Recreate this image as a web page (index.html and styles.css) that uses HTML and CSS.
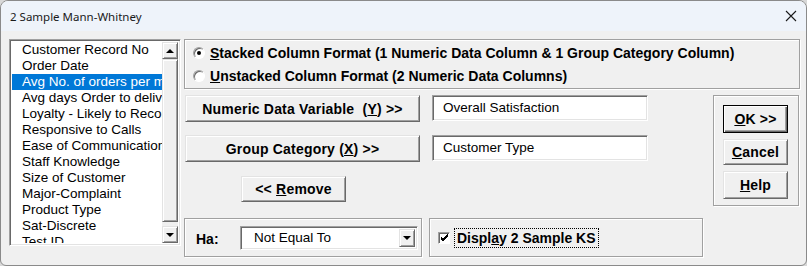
FILE: index.html
```html
<!DOCTYPE html>
<html lang="en">
<head>
    <meta charset="UTF-8">
    <title>2 Sample Mann-Whitney</title>
    <link rel="stylesheet" href="styles.css">
</head>
<body>
    <div class="window">
        <div class="titlebar">
            <span class="title">2 Sample Mann-Whitney</span>
            <svg class="close" width="12" height="12" viewBox="0 0 12 12">
                <path d="M1 1 L11 11 M11 1 L1 11" stroke="#1a1a1a" stroke-width="1.1" fill="none"/>
            </svg>
        </div>

        <div class="client">
            <div class="listbox">
                <ul class="items">
                    <li>Customer Record No</li>
                    <li>Order Date</li>
                    <li class="selected">Avg No. of orders per month</li>
                    <li>Avg days Order to delivery</li>
                    <li>Loyalty - Likely to Recommend</li>
                    <li>Responsive to Calls</li>
                    <li>Ease of Communication</li>
                    <li>Staff Knowledge</li>
                    <li>Size of Customer</li>
                    <li>Major-Complaint</li>
                    <li>Product Type</li>
                    <li>Sat-Discrete</li>
                    <li>Test ID</li>
                </ul>
                <div class="scrollbar">
                    <div class="sb-btn"><span class="arrow up"></span></div>
                    <div class="sb-thumb"></div>
                    <div class="sb-btn"><span class="arrow down"></span></div>
                </div>
            </div>

            <div class="main">
                <div class="group format">
                    <div class="radio-row">
                        <span class="radio checked"></span>
                        <span><u>S</u>tacked Column Format (1 Numeric Data Column &amp; 1 Group Category Column)</span>
                    </div>
                    <div class="radio-row">
                        <span class="radio"></span>
                        <span><u>U</u>nstacked Column Format (2 Numeric Data Columns)</span>
                    </div>
                </div>

                <div class="middle">
                    <div class="vars">
                        <div class="var-row">
                            <div class="btn var-btn"><span>Numeric Data Variable&nbsp; (<u>Y</u>) &gt;&gt;</span></div>
                            <div class="field">Overall Satisfaction</div>
                        </div>
                        <div class="var-row second">
                            <div class="btn var-btn"><span>Group Category (<u>X</u>) &gt;&gt;</span></div>
                            <div class="field">Customer Type</div>
                        </div>
                        <div class="btn remove-btn"><span>&lt;&lt; <u>R</u>emove</span></div>

                        <div class="options">
                            <div class="group ha">
                                <span class="ha-label">Ha:</span>
                                <div class="combo">
                                    <span class="combo-text">Not Equal To</span>
                                    <div class="combo-btn"><span class="arrow down"></span></div>
                                </div>
                            </div>
                            <div class="group ks">
                                <span class="checkbox">
                                    <svg width="9" height="9" viewBox="0 0 9 9">
                                        <path d="M1 4 L3 6 L8 1 M1 5 L3 7 L8 2 M1 6 L3 8 L8 3" stroke="#000" stroke-width="1" fill="none"/>
                                    </svg>
                                </span>
                                <span class="ks-label">Displ<u>a</u>y 2 Sample KS</span>
                            </div>
                        </div>
                    </div>

                    <div class="group actions">
                        <div class="btn action default"><span><u>O</u>K &gt;&gt;</span></div>
                        <div class="btn action"><span><u>C</u>ancel</span></div>
                        <div class="btn action"><span><u>H</u>elp</span></div>
                    </div>
                </div>
            </div>
        </div>
    </div>
</body>
</html>
```

FILE: styles.css
```css
* {
    margin: 0;
    padding: 0;
    box-sizing: border-box;
}

body {
    background: #d8d8d8;
    font-family: 'Liberation Sans', Arial, sans-serif;
    font-size: 13px;
    color: #000;
}

.window {
    width: 807px;
    height: 266px;
    background: #f0f0f0;
    border: 1px solid #8a8a8a;
    border-radius: 8px 8px 6px 6px;
    overflow: hidden;
}

/* title bar */
.titlebar {
    height: 30px;
    background: #eef3fa;
    display: flex;
    align-items: center;
    justify-content: space-between;
    padding: 0 8px 0 9px;
}

.title {
    font-family: 'Noto Sans', 'Open Sans', sans-serif;
    font-size: 11.5px;
    color: #1a1a1a;
}

.close {
    margin-right: 1px;
}

/* client area */
.client {
    display: flex;
    gap: 3px;
    padding: 8px 0 0 8px;
}

.listbox,
.field,
.combo {
    background: #fff;
    border: 1px solid;
    border-color: #a0a0a0 #fff #fff #a0a0a0;
    box-shadow: inset 1px 1px 0 #696969, inset -1px -1px 0 #e3e3e3;
}

.listbox {
    width: 172px;
    height: 207px;
    display: flex;
    padding: 1px 2px 2px 2px;
    overflow: hidden;
}

.items {
    list-style: none;
    flex: 1;
    overflow: hidden;
    font-size: 13.5px;
    padding-top: 1px;
}

.items li {
    height: 16px;
    line-height: 16px;
    padding-left: 10px;
    white-space: nowrap;
    overflow: hidden;
}

.items li.selected {
    background: #0078d7;
    color: #fff;
}

.scrollbar {
    width: 16px;
    display: flex;
    flex-direction: column;
    background: #f0f0f0;
    margin-top: 1px;
}

.sb-btn,
.sb-thumb,
.combo-btn,
.btn {
    background: #f0f0f0;
    border: 1px solid;
    border-color: #e3e3e3 #696969 #696969 #e3e3e3;
    box-shadow: inset 1px 1px 0 #fff, inset -1px -1px 0 #a0a0a0;
}

.sb-btn {
    height: 17px;
    display: flex;
    align-items: center;
    justify-content: center;
}

.sb-thumb {
    flex: 1;
    margin-bottom: 4px;
}

.arrow {
    width: 0;
    height: 0;
    border-left: 4px solid transparent;
    border-right: 4px solid transparent;
}

.arrow.up {
    border-bottom: 4px solid #000;
}

.arrow.down {
    border-top: 4px solid #000;
}

/* right side */
.main {
    width: 616px;
}

.group {
    border: 1px solid #a0a0a0;
    box-shadow: inset 1px 1px 0 #fff, 1px 1px 0 #fff;
}

.format {
    height: 50px;
    padding: 3px 0 0 8px;
    font-weight: bold;
    font-size: 14px;
}

.radio-row {
    display: flex;
    align-items: center;
    gap: 5px;
    height: 20px;
    margin-bottom: 3px;
    white-space: nowrap;
}

.radio {
    width: 12px;
    height: 12px;
    border-radius: 50%;
    background: #fff;
    border: 1px solid;
    border-color: #a0a0a0 #fff #fff #a0a0a0;
    box-shadow: inset 1px 1px 0 #696969;
    display: flex;
    align-items: center;
    justify-content: center;
}

.radio.checked::after {
    content: '';
    width: 4px;
    height: 4px;
    border-radius: 50%;
    background: #000;
}

.middle {
    display: flex;
    margin-top: 6px;
}

.vars {
    width: 519px;
    padding-left: 1px;
}

.var-row {
    display: flex;
    align-items: flex-start;
    gap: 12px;
}

.var-row.second {
    margin-top: 13px;
}

.btn {
    display: flex;
    align-items: center;
    justify-content: center;
    font-weight: bold;
    font-size: 14px;
    letter-spacing: 0.2px;
    white-space: nowrap;
}

.var-btn {
    width: 235px;
    height: 27px;
}

.field {
    width: 216px;
    height: 26px;
    padding: 4px 0 0 10px;
    font-size: 13.5px;
}

.remove-btn {
    width: 105px;
    height: 26px;
    margin: 14px 0 0 56px;
}

.options {
    display: flex;
    gap: 7px;
    margin-top: 16px;
    margin-left: -1px;
}

.ha {
    width: 238px;
    height: 39px;
    display: flex;
    align-items: center;
    padding-left: 11px;
}

.ha-label {
    width: 44px;
    font-weight: bold;
    font-size: 14px;
    padding-top: 2px;
}

.combo {
    width: 178px;
    height: 24px;
    display: flex;
    align-items: stretch;
    padding: 2px;
}

.combo-text {
    flex: 1;
    padding: 1px 0 0 11px;
    font-size: 13.5px;
}

.combo-btn {
    width: 16px;
    display: flex;
    align-items: center;
    justify-content: center;
}

.ks {
    flex: 1;
    height: 39px;
    display: flex;
    align-items: center;
    padding-left: 8px;
}

.checkbox {
    width: 12px;
    height: 12px;
    background: #fff;
    border: 1px solid;
    border-color: #a0a0a0 #fff #fff #a0a0a0;
    box-shadow: inset 1px 1px 0 #696969;
    display: flex;
    align-items: center;
    justify-content: center;
}

.ks-label {
    margin-left: 5px;
    padding: 1px 2px;
    font-weight: bold;
    font-size: 14px;
    outline: 1px dotted #000;
}

.actions {
    width: 86px;
    height: 111px;
    margin-left: 10px;
    padding: 9px 0 0 9px;
    display: flex;
    flex-direction: column;
    gap: 6px;
}

.action {
    width: 65px;
    height: 26px;
}

.action.default {
    height: 28px;
    border-color: #000;
    box-shadow: inset 1px 1px 0 #fff, inset -1px -1px 0 #696969, inset -2px -2px 0 #a0a0a0;
}

.action:last-child {
    height: 28px;
}
```
